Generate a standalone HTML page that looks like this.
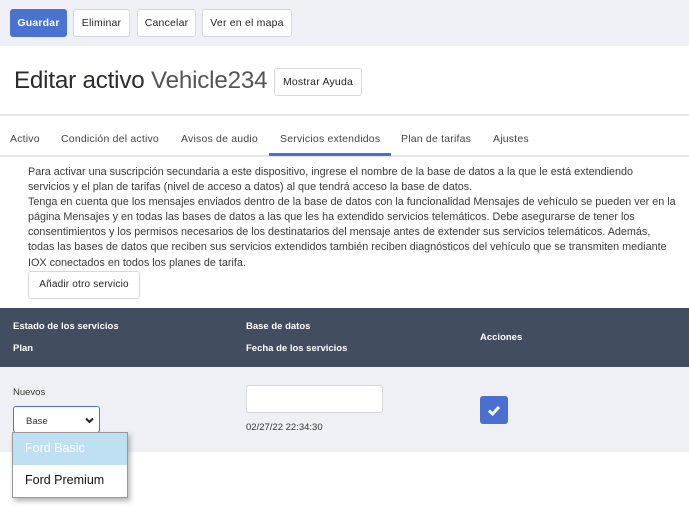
<!DOCTYPE html>
<html><head><meta charset="utf-8"><style>
*{box-sizing:border-box;margin:0;padding:0}
body{width:689px;height:514px;overflow:hidden;background:#fff;font-family:"Liberation Sans",sans-serif;color:#333;position:relative}
.top{position:absolute;left:0;top:0;width:689px;height:46px;background:#eff0f5}
.btn{position:absolute;height:28px;border:1px solid #d5d7dc;border-radius:3px;background:#fff;font-size:10.5px;line-height:26px;text-align:center;color:#222;letter-spacing:.2px}
.prim{background:#4a73d0;border-color:#4a73d0;color:#fff;font-weight:bold}
h1{position:absolute;left:14px;top:67px;font-weight:normal;font-size:24.2px;color:#2a2a33;letter-spacing:-.2px}
h1 span{color:#555}
.line{position:absolute;left:0;width:689px;height:2px;background:#e6e7ec}
.tab{position:absolute;top:133px;font-size:10.5px;color:#444;letter-spacing:.2px}
.txt{position:absolute;left:28px;top:165px;font-size:10.8px;line-height:15.1px;color:#3a3a3a;white-space:nowrap;letter-spacing:0}
.thead{position:absolute;left:0;top:308px;width:689px;height:59px;background:#434d60;color:#fff;font-weight:bold;font-size:9.5px}
.thead div{position:absolute}
.row{position:absolute;left:0;top:367px;width:689px;height:85px;background:#eff0f5}
</style></head><body>
<div class="top"></div>
<div class="btn prim" style="left:10px;top:9px;width:57px">Guardar</div>
<div class="btn" style="left:73px;top:9px;width:57px">Eliminar</div>
<div class="btn" style="left:137px;top:9px;width:59px">Cancelar</div>
<div class="btn" style="left:202px;top:9px;width:90px">Ver en el mapa</div>
<h1>Editar activo <span>Vehicle234</span></h1>
<div class="btn" style="left:274px;top:68px;width:88px">Mostrar Ayuda</div>
<div class="line" style="top:114px"></div>
<div class="tab" style="left:10px">Activo</div>
<div class="tab" style="left:61px">Condición del activo</div>
<div class="tab" style="left:181px">Avisos de audio</div>
<div class="tab" style="left:280px">Servicios extendidos</div>
<div class="tab" style="left:401px">Plan de tarifas</div>
<div class="tab" style="left:493px">Ajustes</div>
<div class="line" style="top:155px"></div>
<div style="position:absolute;left:269px;top:153px;width:122px;height:3px;background:#4a6fd0"></div>
<div class="txt">Para activar una suscripción secundaria a este dispositivo, ingrese el nombre de la base de datos a la que le está extendiendo<br>servicios y el plan de tarifas (nivel de acceso a datos) al que tendrá acceso la base de datos.<br>Tenga en cuenta que los mensajes enviados dentro de la base de datos con la funcionalidad Mensajes de vehículo se pueden ver en la<br>página Mensajes y en todas las bases de datos a las que les ha extendido servicios telemáticos. Debe asegurarse de tener los<br>consentimientos y los permisos necesarios de los destinatarios del mensaje antes de extender sus servicios telemáticos. Además,<br>todas las bases de datos que reciben sus servicios extendidos también reciben diagnósticos del vehículo que se transmiten mediante<br>IOX conectados en todos los planes de tarifa.</div>
<div class="btn" style="left:28px;top:271px;width:112px;height:28px;font-size:10px">Añadir otro servicio</div>
<div class="thead">
<div style="left:13px;top:13px">Estado de los servicios</div>
<div style="left:13px;top:35px">Plan</div>
<div style="left:246px;top:13px">Base de datos</div>
<div style="left:246px;top:35px">Fecha de los servicios</div>
<div style="left:480px;top:24px">Acciones</div>
</div>
<div class="row">
<div style="position:absolute;left:13px;top:20px;font-size:9.5px;color:#333">Nuevos</div>
<div style="position:absolute;left:13px;top:39px;width:87px;height:27px;border:1px solid #4a73d0;border-radius:3px;background:#fff;font-size:9.5px;padding:9px 0 0 12px">Base<svg style="position:absolute;right:5px;top:10px" width="9" height="7" viewBox="0 0 9 7"><path d="M1 1.5L4.5 5L8 1.5" stroke="#222" stroke-width="2" fill="none"/></svg></div>
<div style="position:absolute;left:246px;top:18px;width:137px;height:28px;border:1px solid #d5d7dc;border-radius:3px;background:#fff"></div>
<div style="position:absolute;left:246px;top:55px;font-size:9.5px;color:#333">02/27/22 22:34:30</div>
<div style="position:absolute;left:480px;top:29px;width:28px;height:28px;background:#4a6fd0;border-radius:3px"><svg width="28" height="28" viewBox="0 0 28 28"><path d="M9 14.5L12.5 18L19 11" stroke="#fff" stroke-width="3" fill="none"/></svg></div>
</div>
<div style="position:absolute;left:12px;top:432px;width:116px;height:66px;background:#fff;border:1px solid #999;box-shadow:2px 3px 5px rgba(0,0,0,.3)">
<div style="height:32px;background:#bfdff2;color:#fff;font-size:12.5px;padding:8px 0 0 12px">Ford Basic</div>
<div style="font-size:12.5px;color:#111;padding:8px 0 0 12px">Ford Premium</div>
</div>
</body></html>
